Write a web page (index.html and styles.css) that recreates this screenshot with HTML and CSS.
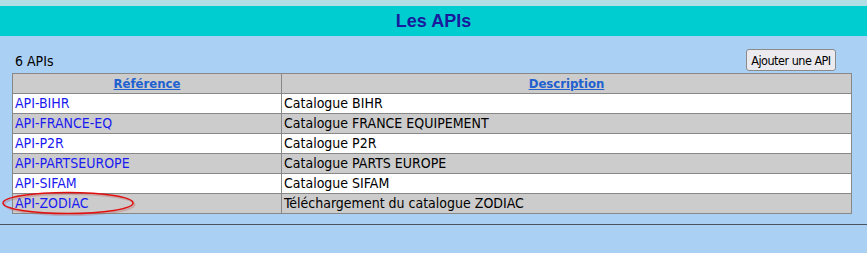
FILE: index.html
```html
<!DOCTYPE html>
<html lang="fr">
<head>
    <meta charset="UTF-8">
    <title>Les APIs</title>
    <link rel="stylesheet" href="styles.css">
</head>
<body>

    <div class="header">
        <h1>Les APIs</h1>
    </div>

    <div class="content">
        <div class="toolbar">
            <span class="count">6 APIs</span>
            <button class="btn">Ajouter une API</button>
        </div>

        <table class="liste">
            <tr>
                <th class="col-ref"><a href="#">Référence</a></th>
                <th><a href="#">Description</a></th>
            </tr>
            <tr class="odd">
                <td><a href="#">API-BIHR</a></td>
                <td>Catalogue BIHR</td>
            </tr>
            <tr class="even">
                <td><a href="#">API-FRANCE-EQ</a></td>
                <td>Catalogue FRANCE EQUIPEMENT</td>
            </tr>
            <tr class="odd">
                <td><a href="#">API-P2R</a></td>
                <td>Catalogue P2R</td>
            </tr>
            <tr class="even">
                <td><a href="#">API-PARTSEUROPE</a></td>
                <td>Catalogue PARTS EUROPE</td>
            </tr>
            <tr class="odd">
                <td><a href="#">API-SIFAM</a></td>
                <td>Catalogue SIFAM</td>
            </tr>
            <tr class="even">
                <td class="marked">
                    <a href="#">API-ZODIAC</a>
                    <!-- annotation rouge -->
                    <svg class="circle" width="136" height="26" viewBox="0 0 136 26">
                        <ellipse cx="67" cy="12" rx="65" ry="10.5" fill="none" stroke="#b86060" stroke-opacity="0.35" stroke-width="2" transform="translate(1.5 1.5)"/>
                        <ellipse cx="67" cy="12" rx="65" ry="10.5" fill="none" stroke="#e01010" stroke-width="1.5"/>
                    </svg>
                </td>
                <td>Téléchargement du catalogue ZODIAC</td>
            </tr>
        </table>
    </div>

    <div class="footer"></div>

</body>
</html>
```

FILE: styles.css
```css
body {
    font-family: 'DejaVu Sans Condensed', 'DejaVu Sans', sans-serif;
    font-size: 14px;
    background-color: #aad0f4;
    color: #000;
    margin: 0;
    padding: 0;
}
.header {
    border-top: 6px solid #b0dee4;
    background-color: #00cdd0;
    height: 30px;
    display: flex;
    align-items: center;
    justify-content: center;
}
h1 {
    margin: 0;
    font-family: 'Liberation Sans', Arial, sans-serif;
    font-size: 18px;
    font-weight: bold;
    color: #1a1a9c;
}
.content {
    padding: 13px 15px 0 12px;
}
.toolbar {
    display: flex;
    justify-content: space-between;
    align-items: flex-end;
    height: 24px;
}
.count {
    padding-left: 3px;
    padding-bottom: 4px;
}
.btn {
    font-family: 'DejaVu Sans Condensed', 'DejaVu Sans', sans-serif;
    font-size: 12.5px;
    letter-spacing: -0.5px;
    color: #000;
    background-color: #ebebef;
    border: 1px solid #8a8a8a;
    border-radius: 3px;
    height: 22px;
    width: 90px;
    padding: 0;
    margin-right: 16px;
    margin-bottom: 2px;
}
.liste {
    width: 100%;
    border-collapse: collapse;
    border: 1px solid #888;
}
.liste th,
.liste td {
    border: 1px solid #888;
    height: 19px;
    padding: 0 2px;
    line-height: 17px;
}
.liste th {
    background-color: #cccccc;
    text-align: center;
    font-size: 13px;
}
.liste th a {
    color: #2060d0;
    text-decoration: underline;
}
.col-ref {
    width: 264px;
}
.liste td a {
    color: #1a1af0;
    text-decoration: none;
}
.odd td {
    background-color: #fff;
}
.even td {
    background-color: #cccccc;
}
.marked {
    position: relative;
}
.circle {
    position: absolute;
    left: -12px;
    top: -3px;
    overflow: visible;
}
.footer {
    margin-top: 10px;
    border-top: 1px solid #4a5560;
}
```
